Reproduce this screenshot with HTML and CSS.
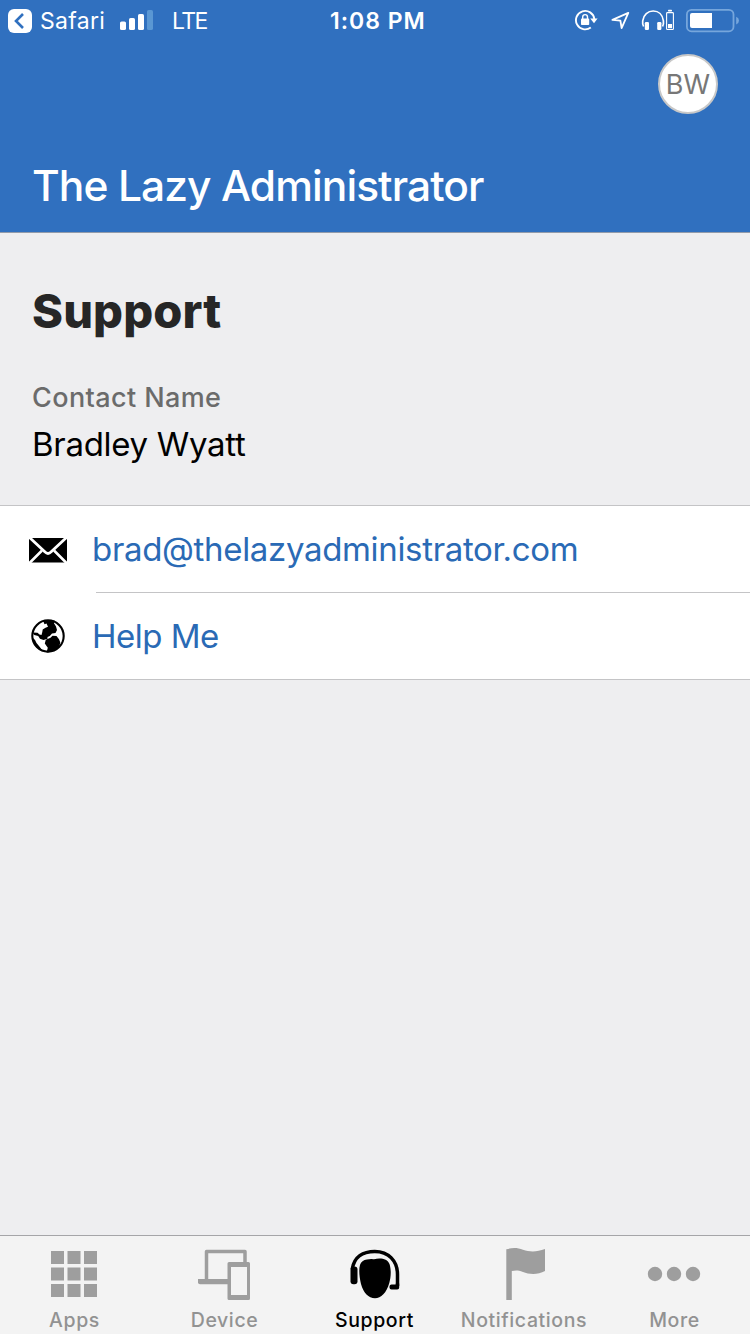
FILE: index.html
```
<!DOCTYPE html>
<html>
    <head>
        <meta charset="utf-8">
        <title>Support</title>
        <link rel="stylesheet" href="styles.css">
    </head>
    <body>
        <div class="viewport">
            <div class="header">
                <!-- status bar -->
                <div class="status">
                    <div class="status-left">
                        <svg class="icon-back" width="24" height="24" viewBox="0 0 24 24">
                            <rect width="24" height="24" rx="6" fill="#fff"/>
                            <path d="M15 5 L8 12 L15 19" fill="none" stroke="#3070bf" stroke-width="2.6"/>
                        </svg>
                        <span class="status-safari">Safari</span>
                        <svg class="icon-signal" width="34" height="21" viewBox="0 0 34 21">
                            <rect x="0" y="11.5" width="6" height="8.5" rx="1.6" fill="#fff"/>
                            <rect x="9" y="8" width="6" height="12" rx="1.6" fill="#fff"/>
                            <rect x="18" y="4" width="6" height="16" rx="1.6" fill="#fff"/>
                            <rect x="27" y="0" width="6" height="20" rx="1.6" fill="#5a97d3"/>
                        </svg>
                        <span class="status-lte">LTE</span>
                    </div>
                    <span class="status-time">1:08 PM</span>
                    <svg class="status-icons" width="176" height="40" viewBox="574 0 176 40">
                        <!-- rotation lock -->
                        <path d="M590.8 27.4 A9.2 9.2 0 1 1 594.3 19" fill="none" stroke="#fff" stroke-width="1.9"/>
                        <path d="M590.3 18.6 H597.6 L594 23.3 Z" fill="#fff"/>
                        <rect x="581" y="18.6" width="8.2" height="6.4" rx=".8" fill="#fff"/>
                        <path d="M582.7 19 V17 A2.4 2.4 0 0 1 587.5 17 V19" fill="none" stroke="#fff" stroke-width="1.4"/>
                        <!-- location -->
                        <path d="M628.3 12.9 L612.4 19.8 L620.4 20.6 L621.6 28.2 Z" fill="none" stroke="#fff" stroke-width="1.8" stroke-linejoin="round"/>
                        <!-- headphones -->
                        <path d="M643.6 26.5 C642.4 24 642.5 22.2 642.7 20.8 C643.5 14.5 648 11 653.2 11 C658.5 11 662.6 14.5 663.4 20.8 C663.6 22.2 663.7 24 662.6 26.5" fill="none" stroke="#fff" stroke-width="1.7"/>
                        <rect x="644.8" y="22" width="4.2" height="8" rx="1.2" fill="#fff"/>
                        <rect x="657.2" y="22" width="4.2" height="8" rx="1.2" fill="#fff"/>
                        <rect x="668" y="9.8" width="4" height="1.6" rx=".6" fill="#fff"/>
                        <rect x="666.6" y="12.6" width="6.8" height="16.9" rx=".8" fill="none" stroke="#fff" stroke-width="1.1"/>
                        <rect x="668" y="24" width="4" height="4.2" fill="#fff"/>
                        <!-- battery -->
                        <rect x="686.9" y="9.9" width="46.6" height="21.4" rx="4.6" fill="none" stroke="#76a6dc" stroke-width="1.8"/>
                        <path d="M692 13 H712 V28 H692 Q690 28 690 26 V15 Q690 13 692 13 Z" fill="#fff"/>
                        <path d="M736.2 16.8 Q739 18 739 20.6 Q739 23.2 736.2 24.4 Z" fill="#76a6dc"/>
                    </svg>
                </div>
                <div class="account">
                    <div class="avatar">BW</div>
                </div>
                <div class="company">The Lazy Administrator</div>
            </div>
            <!-- contact -->
            <div class="contact">
                <h1 class="contact-title">Support</h1>
                <div class="contact-label">Contact Name</div>
                <div class="contact-name">Bradley Wyatt</div>
            </div>
            <div class="list">
                <a class="row">
                    <svg class="row-icon" width="96" height="86" viewBox="0 506 96 86">
                        <rect x="29" y="538" width="38" height="24.5" fill="#000"/>
                        <path d="M29.5 537.5 L44.8 551.8 Q48 555 51.2 551.8 L66.5 537.5" fill="none" stroke="#fff" stroke-width="2.8"/>
                        <path d="M29 563.5 L42 550.5 M67 563.5 L54 550.5" fill="none" stroke="#fff" stroke-width="2.5"/>
                    </svg>
                    <span class="row-text">brad@thelazyadministrator.com</span>
                </a>
                <a class="row">
                    <svg class="row-icon" width="96" height="86" viewBox="0 593 96 86">
                        <circle cx="48" cy="636" r="15.7" fill="#fff" stroke="#000" stroke-width="2.1"/>
                        <path d="M43 620.5 H54.5 L54 623.3 L56 626.5 L57 630 L55.5 633 L52 633.6 L49.8 636 L47.5 637 L47.5 638.8 L43.5 640 L40 638.8 L38.2 636 L34.3 635 L32.5 632.5 L37.5 632.7 L39.5 634.5 L41.5 635 L42.3 632 L42.7 629.5 L45.5 627.8 L48 626.8 L46.5 623.5 L44.5 624.2 Z" fill="#000"/>
                        <path d="M45.8 639.7 L50.5 637.8 L52.5 635.8 L56.5 636 L59 639.3 L60.3 642.5 L59 647.5 Q54 652 46.5 652.4 L47.8 647.7 L44.8 643.6 Z" fill="#000"/>
                        <path d="M32 637 Q34.8 639 36.5 643 L40 647.3 L43 651.5 Q33 647.5 32 637 Z" fill="#000"/>
                    </svg>
                    <span class="row-text row-help">Help Me</span>
                </a>
            </div>
            <!-- tabs -->
            <div class="tabs">
                <div class="tab">
                    <svg class="tab-icon" width="60" height="60" viewBox="45 1244 60 60">
                        <path d="M51 1251h13v13h-13z M67.5 1251h13v13h-13z M84 1251h13v13h-13z M51 1267.5h13v13h-13z M67.5 1267.5h13v13h-13z M84 1267.5h13v13h-13z M51 1284h13v13h-13z M67.5 1284h13v13h-13z M84 1284h13v13h-13z" fill="#9e9e9e"/>
                    </svg>
                    <span class="tab-text">Apps</span>
                </div>
                <div class="tab">
                    <svg class="tab-icon" width="60" height="60" viewBox="195 1244 60 60">
                        <path d="M206.5 1280 V1251.5 H245 V1263" fill="none" stroke="#9e9e9e" stroke-width="3.5" stroke-linejoin="round"/>
                        <path d="M198 1279 H228 V1284.3 H200 Q198 1284.3 198 1282.3 Z" fill="#9e9e9e"/>
                        <path fill-rule="evenodd" d="M229 1262 H248.5 Q250 1262 250 1263.5 V1298.5 Q250 1300 248.5 1300 H229 Q227.5 1300 227.5 1298.5 V1263.5 Q227.5 1262 229 1262 Z M231 1267 V1295 H247 V1267 Z" fill="#9e9e9e"/>
                    </svg>
                    <span class="tab-text">Device</span>
                </div>
                <div class="tab tab-active">
                    <svg class="tab-icon" width="60" height="60" viewBox="345 1244 60 60">
                        <path d="M352.3 1269 C354 1257 363 1251.4 374.8 1251.4 C388.5 1251.4 397.5 1261 397.5 1274.5 V1286" fill="none" stroke="#000" stroke-width="3.5"/>
                        <rect x="350.5" y="1266.5" width="7" height="17.7" rx="3" fill="#000"/>
                        <path d="M395.8 1283.5 H399.2 V1287.5 Q399.2 1289.5 397.2 1289.5 H391.5 Q389.5 1289.5 389.5 1287.5 V1286.5 Q389.5 1284.4 391.5 1284.4 H395.8 Z" fill="#000"/>
                        <path d="M367 1259.5 Q370.5 1258.5 374 1259.2 C381 1257.5 387.5 1259 389.5 1264 C391.5 1270 390.8 1278 389.3 1283 C386.5 1293 381 1298.2 375 1298.2 C368.5 1298.2 363.5 1293 361 1284 C359.5 1278 358.5 1270 360 1265 C361 1261.5 363.5 1260 367 1259.5 Z" fill="#000"/>
                    </svg>
                    <span class="tab-text">Support</span>
                </div>
                <div class="tab">
                    <svg class="tab-icon" width="60" height="60" viewBox="494 1244 60 60">
                        <path d="M506.3 1249.3 C513 1247.3 517.5 1247.7 523 1249.7 C530 1252.2 537 1252 545 1249 V1271 C538 1275 529 1274.5 523 1272 C518 1270 515.5 1270.3 511.8 1271 V1300 H506.3 Z" fill="#9e9e9e"/>
                    </svg>
                    <span class="tab-text">Notifications</span>
                </div>
                <div class="tab">
                    <svg class="tab-icon" width="60" height="60" viewBox="645 1244 60 60">
                        <circle cx="655" cy="1274" r="7.2" fill="#9e9e9e"/>
                        <circle cx="674" cy="1274" r="7.2" fill="#9e9e9e"/>
                        <circle cx="693" cy="1274" r="7.2" fill="#9e9e9e"/>
                    </svg>
                    <span class="tab-text">More</span>
                </div>
            </div>
        </div>
    </body>
</html>
```
FILE: styles.css
```
body {
    margin: 0;
    font-family: Inter, "Liberation Sans", sans-serif;
}
.viewport {
    width: 750px;
    height: 1334px;
    background: #eeeef0;
    display: flex;
    flex-direction: column;
    overflow: hidden;
    white-space: nowrap;
}
.header {
    box-sizing: border-box;
    height: 233px;
    background: #3070bf;
    border-bottom: 1px solid #929baa;
    color: #fff;
}
.status {
    height: 40px;
    display: grid;
    grid-template-columns: 330px 244px 176px;
    font-size: 23px;
    line-height: 42px;
}
.status-left {
    display: flex;
    height: 42px;
    align-items: center;
    padding-left: 8px;
}
.status-safari {
    width: 80px;
    padding-left: 8px;
    box-sizing: border-box;
    letter-spacing: 0.3px;
}
.icon-signal {
    margin: 0 0 2px 8px;
}
.status-lte {
    margin-left: 18px;
    letter-spacing: -1.6px;
}
.status-time {
    font-weight: 600;
    letter-spacing: 1px;
}
.account {
    display: flex;
    justify-content: flex-end;
    padding: 14px 32px 0 0;
}
.avatar {
    box-sizing: border-box;
    width: 60px;
    height: 60px;
    border: 2px solid #c8c8c8;
    border-radius: 50%;
    background: #fff;
    color: #777;
    font-size: 27px;
    line-height: 57px;
    text-align: center;
}
.company {
    padding: 46px 0 0 32px;
    font-size: 42.5px;
    line-height: 52px;
    font-weight: 500;
    letter-spacing: -0.93px;
}
.contact {
    box-sizing: border-box;
    height: 272px;
    padding: 50px 32px 0;
}
.contact-title {
    margin: 0;
    font-size: 47px;
    line-height: 56px;
    font-weight: 800;
    letter-spacing: 0.1px;
    color: #262626;
}
.contact-label {
    margin-top: 42px;
    font-size: 27px;
    line-height: 34px;
    font-weight: 500;
    letter-spacing: 0.4px;
    color: #6b6b6b;
}
.contact-name {
    margin-top: 9px;
    font-size: 33px;
    line-height: 40px;
    letter-spacing: -0.3px;
    color: #000;
}
.list {
    border-top: 1px solid #c4c4c6;
    border-bottom: 1px solid #c4c4c6;
    background: #fff;
}
.row {
    display: flex;
    height: 86px;
    color: #2a6ab5;
}
.row-text {
    flex: 1;
    font-size: 33px;
    line-height: 86px;
    text-indent: -4px;
    letter-spacing: -0.33px;
}
.row-help {
    letter-spacing: -0.5px;
}
.row + .row {
    background: linear-gradient(#c4c4c6, #c4c4c6) 96px 0 / 654px 1px no-repeat;
    padding-top: 1px;
}
.tabs {
    margin-top: auto;
    box-sizing: border-box;
    height: 99px;
    border-top: 1px solid #a5a5a8;
    background: #f3f3f3;
    display: grid;
    grid-template-columns: 149px 151px 149px 150px 151px;
}
.tab {
    display: flex;
    flex-direction: column;
    align-items: center;
    padding-top: 8px;
    color: #929292;
}
.tab-active {
    color: #000;
}
.tab-text {
    font-size: 19.5px;
    line-height: 24px;
    margin-top: 4px;
    font-weight: 500;
    letter-spacing: 0.6px;
}
```
